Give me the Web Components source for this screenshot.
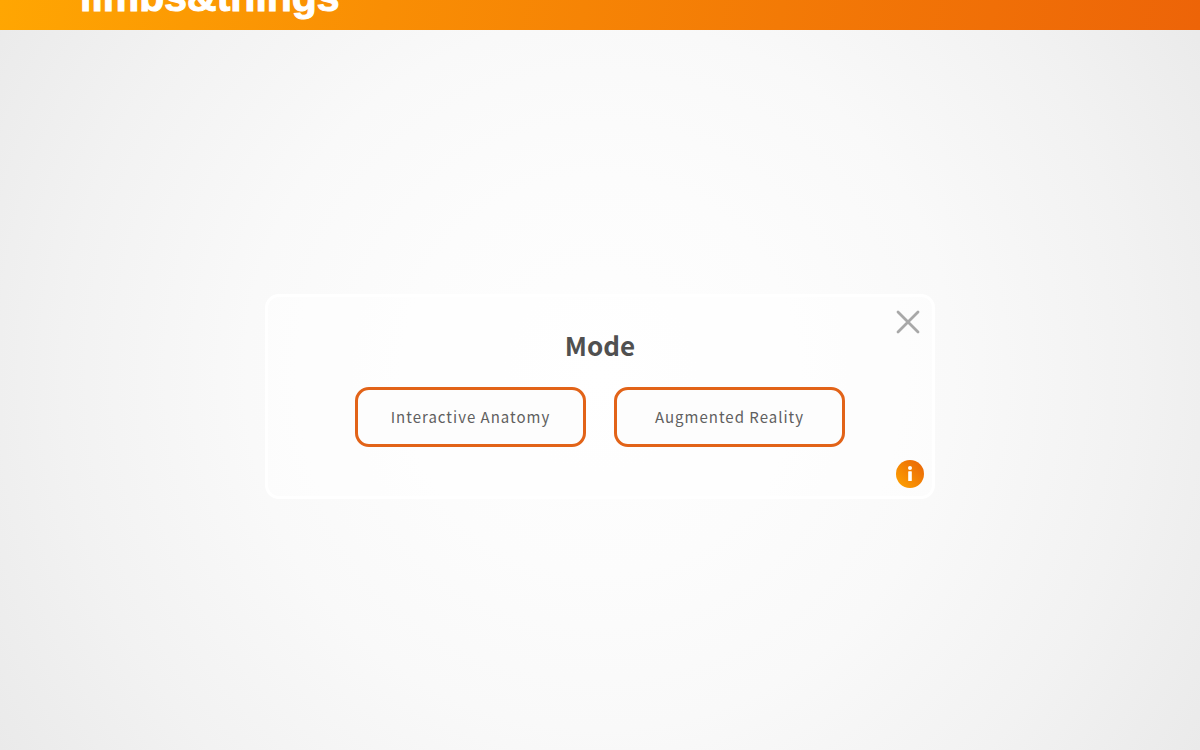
<!DOCTYPE html>
<html lang="en">
<head>
<meta charset="utf-8">
<meta name="viewport" content="width=device-width, initial-scale=1">
<title>Limbs &amp; Things</title>
<style>
  body { margin: 0; font-family: "Noto Sans CJK JP", "Noto Sans", sans-serif; color: #505050; }
</style>
</head>
<body>
<app-shell>
  <brand-bar slot="header">limbs&amp;things</brand-bar>
  <mode-dialog heading="Mode">
    <mode-button>Interactive Anatomy</mode-button>
    <mode-button>Augmented Reality</mode-button>
  </mode-dialog>
</app-shell>

<script>
  const define = (name, html, setup) => {
    const template = document.createElement('template');
    template.innerHTML = html;
    customElements.define(name, class extends HTMLElement {
      constructor() {
        super();
        this.attachShadow({ mode: 'open' }).append(template.content.cloneNode(true));
      }
      connectedCallback() { if (setup) setup(this); }
    });
  };

  define('app-shell', `
    <style>
      :host {
        display: flex; flex-direction: column; min-height: 100vh; box-sizing: border-box;
        background: radial-gradient(circle farthest-corner at 50% 50%, #fefefe 0%, #fcfcfc 28%, #f9f9f9 50%, #f2f2f2 76%, #eaeaea 100%);
      }
      main { flex: 1; display: grid; place-items: center; padding: 13px 16px 0; box-sizing: border-box; }
    </style>
    <slot name="header"></slot>
    <main><slot></slot></main>`);

  // The top bar keeps the lower part of the wordmark in view.
  define('brand-bar', `
    <style>
      :host {
        display: flex; align-items: flex-end; height: 30px; box-sizing: border-box;
        padding: 0 80px 9px; overflow: hidden;
        background: linear-gradient(100deg, #ffa602 0%, #f98e04 32%, #f37a06 65%, #ed6408 100%);
      }
      a { color: #fff; text-decoration: none; font: bold 41px/48px "Liberation Sans", Arial, sans-serif; -webkit-text-stroke: 1px #fff; }
    </style>
    <a href="#"><slot></slot></a>`);

  define('mode-dialog', `
    <style>
      :host { display: block; width: 100%; max-width: 670px; }
      section {
        position: relative; box-sizing: border-box; padding: 30px 48px 49px;
        border: 3px solid #fff; border-radius: 14px; background: rgba(255, 255, 255, .5);
      }
      h1 { margin: 0 0 24px; font-size: 26px; line-height: 36px; font-weight: 700; text-align: center; }
      .choices { display: flex; flex-wrap: wrap; justify-content: center; gap: 28px; }
      button { position: absolute; display: block; padding: 0; border: 0; background: none; cursor: pointer; }
      svg { display: block; }
      .close { top: 13px; right: 12px; }
      .info { right: 8px; bottom: 8px; }
    </style>
    <section role="dialog" aria-labelledby="title">
      <h1 id="title"></h1>
      <div class="choices"><slot></slot></div>
      <button class="close" aria-label="Close">
        <svg width="24" height="24" viewBox="0 0 24 24" fill="none" stroke="#a8a8a8" stroke-width="2.8" stroke-linecap="round"><path d="M2 2l20 20M22 2L2 22"/></svg>
      </button>
      <button class="info" aria-label="Information">
        <svg width="28" height="28" viewBox="0 0 28 28">
          <defs><linearGradient id="g" x1="0" y1="1" x2="1" y2="0"><stop stop-color="#ffa500"/><stop offset="1" stop-color="#e86208"/></linearGradient></defs>
          <circle cx="14" cy="14" r="14" fill="url(#g)"/>
          <circle cx="14" cy="8" r="2" fill="#fff"/>
          <rect x="12.2" y="11.2" width="3.6" height="9.8" rx=".6" fill="#fff"/>
        </svg>
      </button>
    </section>`, el => {
      el.shadowRoot.querySelector('h1').textContent = el.getAttribute('heading');
    });

  define('mode-button', `
    <style>
      :host { display: block; flex: 0 1 231px; }
      button {
        display: block; width: 100%; min-height: 60px; padding: 0 12px; box-sizing: border-box;
        border: 3px solid #e26318; border-radius: 14px; background: #fdfdfd;
        color: #606060; font: 400 15px/24px "Noto Sans CJK JP", "Noto Sans", sans-serif;
        letter-spacing: 1px; white-space: nowrap; cursor: pointer;
      }
    </style>
    <button><slot></slot></button>`);
</script>
</body>
</html>
